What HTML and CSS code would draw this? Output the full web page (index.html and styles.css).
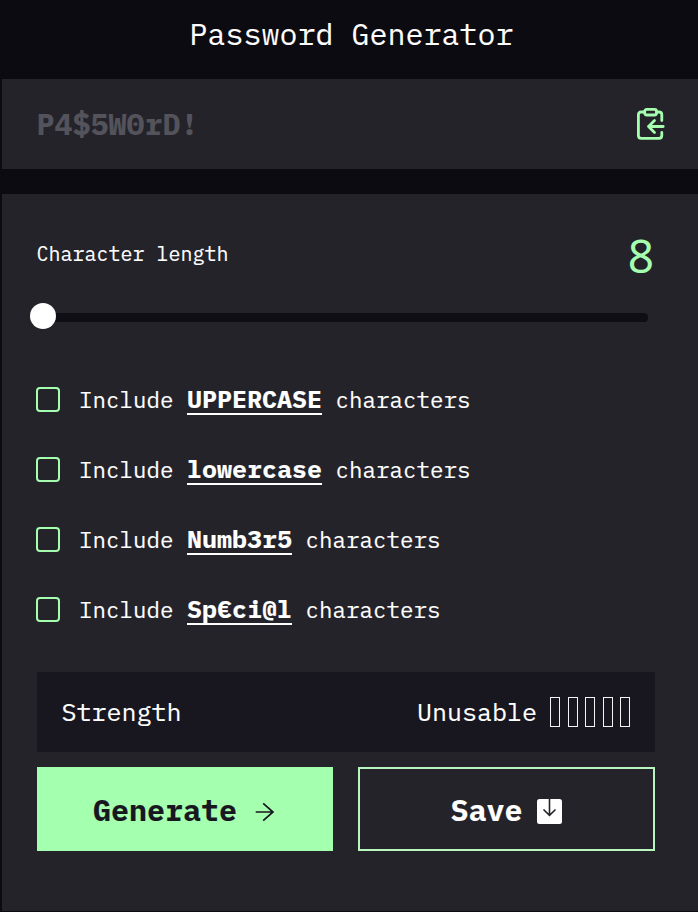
FILE: index.html
```html
<!DOCTYPE html>
<html lang="en">
<head>
<meta charset="utf-8">
<title>Password Generator</title>
<link rel="stylesheet" href="styles.css">
</head>
<body>
<main class="app">
  <h1 class="title">Password Generator</h1>
  <section class="output">
    <span class="password">P4$5W0rD!</span>
    <svg class="copy" viewBox="0 0 30 34" fill="none" stroke="currentColor" stroke-width="2.8" stroke-linecap="round" stroke-linejoin="round">
      <rect x="8.7" y="2.4" width="11.8" height="5.6" rx="2"/>
      <path d="M8.7 5H5.2Q2.4 5 2.4 7.800V28.500Q2.400 31.300 5.200 31.300H23Q25.800 31.300 25.800 28.500V25.500M25.800 13.500V7.800Q25.800 5 23 5H20.500M27.200 19.500H12.500M18.500 13.500L12.500 19.500L18.500 25.500"/>
    </svg>
  </section>
  <section class="settings">
    <div class="length"><span class="caption">Character length</span><span class="count">8</span></div>
    <div class="slider"><div class="thumb"></div></div>
    <div class="options">
      <label class="option"><span class="box"></span><span>Include <strong>UPPERCASE</strong> characters</span></label>
      <label class="option"><span class="box"></span><span>Include <strong>lowercase</strong> characters</span></label>
      <label class="option"><span class="box"></span><span>Include <strong>Numb3r5</strong> characters</span></label>
      <label class="option"><span class="box"></span><span>Include <strong>Sp€ci@l</strong> characters</span></label>
    </div>
    <div class="strength">
      <span class="label">Strength</span>
      <div class="rating"><span class="label">Unusable</span><div class="bars"><i></i><i></i><i></i><i></i><i></i></div></div>
    </div>
    <div class="actions">
      <button class="button primary"><span>Generate</span>
        <svg class="arrow" viewBox="0 0 20 20" fill="none" stroke="currentColor" stroke-width="1.7"><path d="M.7 10H18M8.200 1.400L18 10L8.200 18.600"/></svg>
      </button>
      <button class="button secondary"><span>Save</span>
        <svg class="download" viewBox="0 0 25 25"><rect width="25" height="25" rx="2.5" fill="#fff"/><path d="M12.500 0V16M6.500 10.500L12.500 16.300L18.500 10.500" fill="none" stroke="#24232a" stroke-width="1.600"/></svg>
      </button>
    </div>
  </section>
</main>
</body>
</html>
```

FILE: styles.css
```css
* { box-sizing: border-box; }
body {
  margin: 0;
  background: #0c0b11;
  color: #fff;
  font-family: "IBM Plex Mono", "Liberation Mono", monospace;
  -webkit-text-stroke: .12px;
}
.app { height: 912px; padding: 0 0 1px 2px; display: flex; flex-direction: column; overflow: hidden; }
.title { margin: 0; height: 79px; padding: 16px 0 0 3px; font-size: 30px; line-height: 36px; font-weight: 400; text-align: center; }
.output { height: 90px; flex: none; padding: 0 32px 0 34.5px; background: #24232a; display: flex; align-items: center; justify-content: space-between; }
.password { color: #54535b; font-size: 30px; font-weight: 700; line-height: 36px; }
.copy { width: 30px; height: 34px; color: #a4ffaf; }
.settings { flex: 1; margin-top: 25px; padding: 0 43px 0 35px; background: #24232a; }
.length { height: 119px; padding-top: 31px; display: flex; justify-content: space-between; align-items: flex-start; }
.caption { padding-top: 17px; margin-left: -.5px; font-size: 20px; line-height: 24px; }
.count { font-family: "Noto Sans", sans-serif; font-size: 46px; line-height: 60px; color: #a4ffaf; margin-right: 1px; -webkit-text-stroke: 0; }
.slider { height: 9px; margin-right: 7px; border-radius: 4px; background: #0f0e14; display: flex; align-items: center; }
.thumb { width: 26px; height: 26px; flex: none; margin: -4px 0 0 -7px; border-radius: 50%; background: #fff; }
.options { padding-top: 43px; }
.option { height: 70px; display: flex; align-items: center; gap: 19px; font-size: 22.5px; line-height: 32px; white-space: nowrap; }
.box { width: 24px; height: 25px; margin: -2px 0 0 -1px; border: 2px solid #a4ffaf; border-radius: 4px; }
.option strong { display: inline-block; height: 30px; line-height: 28px; font-size: 25px; border-bottom: 2px solid #fff; }
.strength { height: 80px; margin-top: 27px; padding: 0 25px 0 24.5px; background: #18171f; font-size: 25px; display: flex; align-items: center; justify-content: space-between; }
.label { margin-top: -2px; }
.rating { display: flex; align-items: center; gap: 13px; }
.bars { display: flex; gap: 7.5px; }
.bars i { width: 10px; height: 30px; border: 1px solid #f4f4f6; }
.actions { margin-top: 15px; display: grid; grid-template-columns: 296px 297px; gap: 25px; }
.button { height: 84px; padding: 2px 2px 0 0; border: 0; border-radius: 0; display: flex; align-items: center; justify-content: center; font: 700 30px/36px "IBM Plex Mono", "Liberation Mono", monospace; }
.primary { background: #a4ffaf; color: #18171f; gap: 18px; }
.secondary { border: 2px solid #b9f5bf; background: transparent; color: #fff; gap: 14px; padding-right: 1px; }
.arrow { width: 20px; height: 20px; margin-top: 3px; }
.download { width: 25px; height: 25px; margin-top: 3px; }
```
